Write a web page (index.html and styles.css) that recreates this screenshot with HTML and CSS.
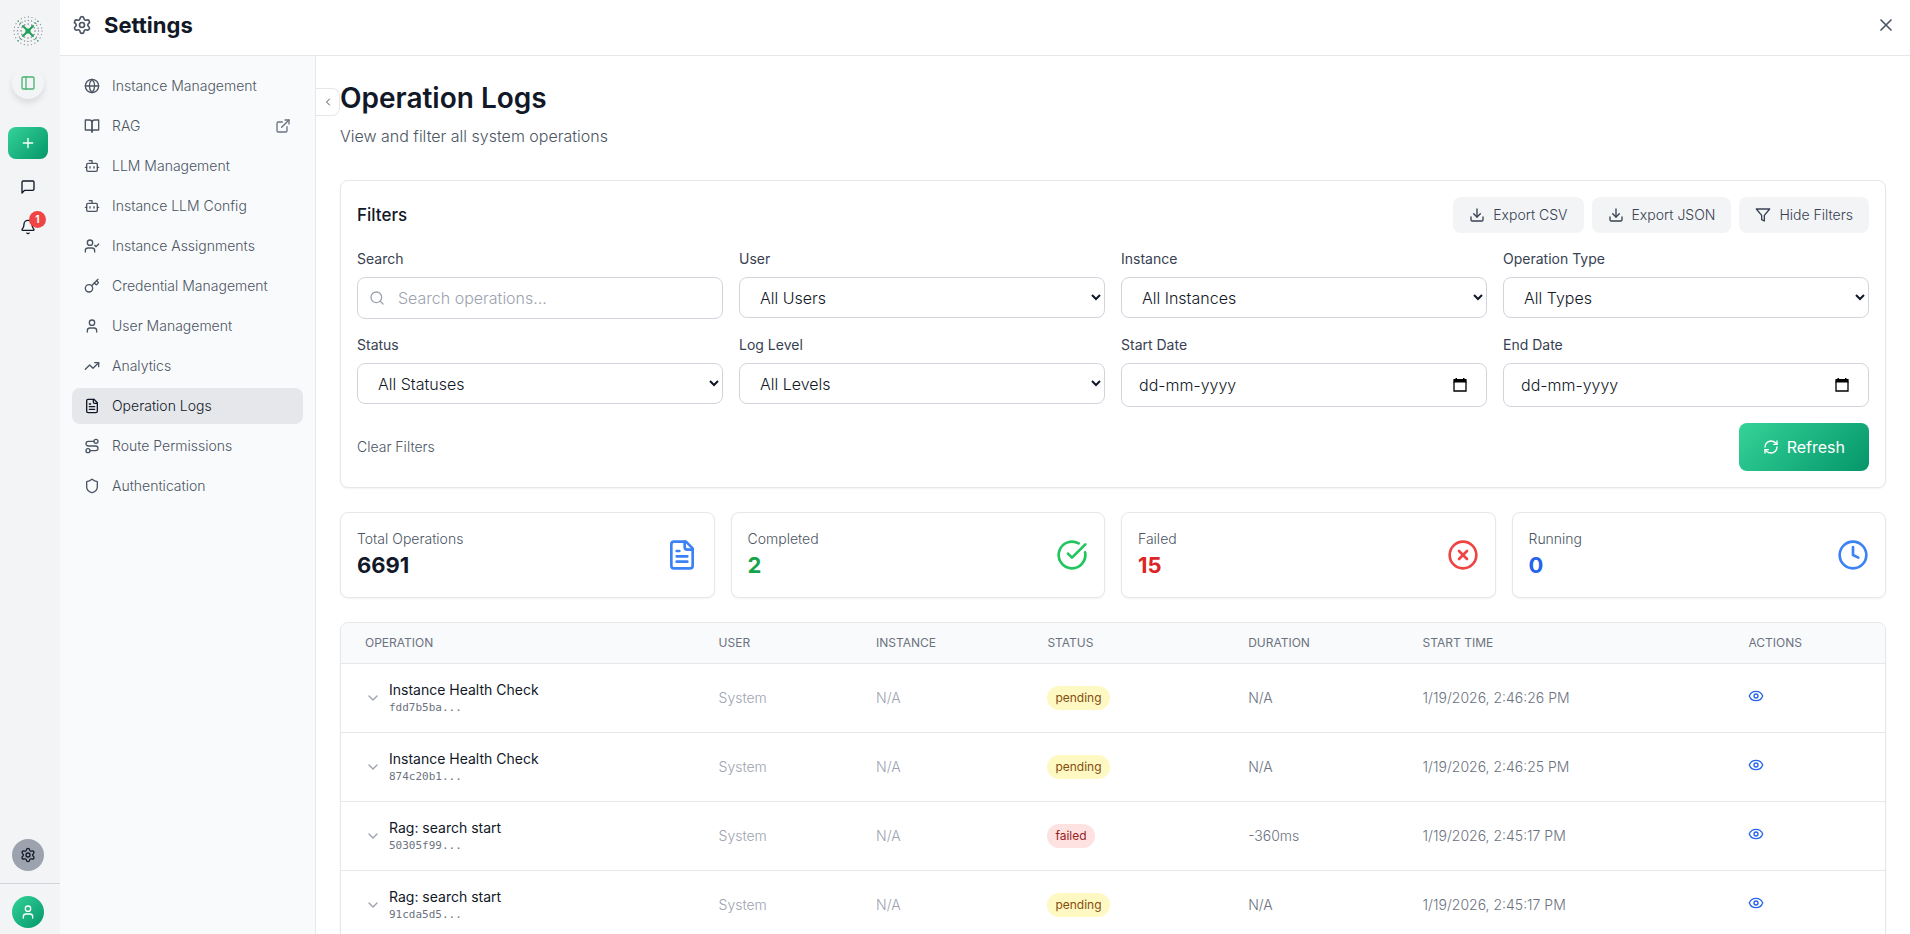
FILE: index.html
```html
<!DOCTYPE html>
<html lang="en">
<head>
  <meta charset="UTF-8">
  <meta name="viewport" content="width=device-width, initial-scale=1.0">
  <title>Settings - Operation Logs</title>
  <link rel="stylesheet" href="styles.css">
</head>
<body>
  <!-- icon set -->
  <svg class="icon-set" aria-hidden="true">
    <symbol id="i-settings" viewBox="0 0 24 24"><path d="M9.671 4.136a2.34 2.34 0 0 1 4.659 0 2.34 2.34 0 0 0 3.319 1.915 2.34 2.34 0 0 1 2.33 4.033 2.34 2.34 0 0 0 0 3.831 2.34 2.34 0 0 1-2.33 4.033 2.34 2.34 0 0 0-3.319 1.915 2.34 2.34 0 0 1-4.659 0 2.34 2.34 0 0 0-3.32-1.915 2.34 2.34 0 0 1-2.33-4.033 2.34 2.34 0 0 0 0-3.831A2.34 2.34 0 0 1 6.35 6.051a2.34 2.34 0 0 0 3.319-1.915"/><circle cx="12" cy="12" r="3"/></symbol>
    <symbol id="i-x" viewBox="0 0 24 24"><path d="M18 6 6 18M6 6l12 12"/></symbol>
    <symbol id="i-panel" viewBox="0 0 24 24"><rect x="3" y="3" width="18" height="18" rx="2"/><path d="M9 3v18"/></symbol>
    <symbol id="i-plus" viewBox="0 0 24 24"><path d="M5 12h14M12 5v14"/></symbol>
    <symbol id="i-message" viewBox="0 0 24 24"><path d="M21 15a2 2 0 0 1-2 2H7l-4 4V5a2 2 0 0 1 2-2h14a2 2 0 0 1 2 2z"/></symbol>
    <symbol id="i-bell" viewBox="0 0 24 24"><path d="M10.268 21a2 2 0 0 0 3.464 0"/><path d="M3.262 15.326A1 1 0 0 0 4 17h16a1 1 0 0 0 .74-1.673C19.41 13.956 18 12.499 18 8A6 6 0 0 0 6 8c0 4.499-1.411 5.956-2.738 7.326"/></symbol>
    <symbol id="i-globe" viewBox="0 0 24 24"><circle cx="12" cy="12" r="10"/><path d="M12 2a14.5 14.5 0 0 0 0 20 14.5 14.5 0 0 0 0-20"/><path d="M2 12h20"/></symbol>
    <symbol id="i-book" viewBox="0 0 24 24"><path d="M2 3h6a4 4 0 0 1 4 4v14a3 3 0 0 0-3-3H2z"/><path d="M22 3h-6a4 4 0 0 0-4 4v14a3 3 0 0 1 3-3h7z"/></symbol>
    <symbol id="i-external" viewBox="0 0 24 24"><path d="M15 3h6v6"/><path d="M10 14 21 3"/><path d="M18 13v6a2 2 0 0 1-2 2H5a2 2 0 0 1-2-2V8a2 2 0 0 1 2-2h6"/></symbol>
    <symbol id="i-bot" viewBox="0 0 24 24"><path d="M12 8V4H8"/><rect x="4" y="8" width="16" height="12" rx="2"/><path d="M2 14h2M20 14h2M15 13v2M9 13v2"/></symbol>
    <symbol id="i-user-check" viewBox="0 0 24 24"><path d="m16 11 2 2 4-4"/><path d="M16 21v-2a4 4 0 0 0-4-4H6a4 4 0 0 0-4 4v2"/><circle cx="9" cy="7" r="4"/></symbol>
    <symbol id="i-key" viewBox="0 0 24 24"><path d="m15.5 7.5 2.3 2.3a1 1 0 0 0 1.4 0l2.1-2.1a1 1 0 0 0 0-1.4L19 4"/><path d="m21 2-9.6 9.6"/><circle cx="7.5" cy="15.5" r="5.5"/></symbol>
    <symbol id="i-user" viewBox="0 0 24 24"><path d="M19 21v-2a4 4 0 0 0-4-4H9a4 4 0 0 0-4 4v2"/><circle cx="12" cy="7" r="4"/></symbol>
    <symbol id="i-trend" viewBox="0 0 24 24"><path d="M16 7h6v6"/><path d="m22 7-8.5 8.5-5-5L2 17"/></symbol>
    <symbol id="i-file" viewBox="0 0 24 24"><path d="M15 2H6a2 2 0 0 0-2 2v16a2 2 0 0 0 2 2h12a2 2 0 0 0 2-2V7Z"/><path d="M14 2v4a2 2 0 0 0 2 2h4M10 9H8M16 13H8M16 17H8"/></symbol>
    <symbol id="i-route" viewBox="0 0 24 24"><circle cx="6" cy="19" r="3"/><path d="M9 19h8.5a3.5 3.5 0 0 0 0-7h-11a3.5 3.5 0 0 1 0-7H15"/><circle cx="18" cy="5" r="3"/></symbol>
    <symbol id="i-shield" viewBox="0 0 24 24"><path d="M20 13c0 5-3.5 7.5-7.66 8.95a1 1 0 0 1-.67-.01C7.5 20.5 4 18 4 13V6a1 1 0 0 1 1-1c2 0 4.5-1.2 6.24-2.72a1.17 1.17 0 0 1 1.52 0C14.51 3.81 17 5 19 5a1 1 0 0 1 1 1z"/></symbol>
    <symbol id="i-left" viewBox="0 0 24 24"><path d="m15 18-6-6 6-6"/></symbol>
    <symbol id="i-down" viewBox="0 0 24 24"><path d="m6 9 6 6 6-6"/></symbol>
    <symbol id="i-download" viewBox="0 0 24 24"><path d="M21 15v4a2 2 0 0 1-2 2H5a2 2 0 0 1-2-2v-4"/><path d="m7 10 5 5 5-5"/><path d="M12 15V3"/></symbol>
    <symbol id="i-filter" viewBox="0 0 24 24"><path d="M22 3H2l8 9.46V19l4 2v-8.54z"/></symbol>
    <symbol id="i-search" viewBox="0 0 24 24"><circle cx="11" cy="11" r="8"/><path d="m21 21-4.3-4.3"/></symbol>
    <symbol id="i-refresh" viewBox="0 0 24 24"><path d="M3 12a9 9 0 0 1 9-9 9.75 9.75 0 0 1 6.74 2.74L21 8"/><path d="M21 3v5h-5"/><path d="M21 12a9 9 0 0 1-9 9 9.75 9.75 0 0 1-6.74-2.74L3 16"/><path d="M8 16H3v5"/></symbol>
    <symbol id="i-check" viewBox="0 0 24 24"><path d="M21.801 10A10 10 0 1 1 17 3.335"/><path d="m9 11 3 3L22 4"/></symbol>
    <symbol id="i-fail" viewBox="0 0 24 24"><circle cx="12" cy="12" r="10"/><path d="m15 9-6 6M9 9l6 6"/></symbol>
    <symbol id="i-clock" viewBox="0 0 24 24"><circle cx="12" cy="12" r="10"/><path d="M12 6v6l4 2"/></symbol>
    <symbol id="i-eye" viewBox="0 0 24 24"><path d="M2.062 12.348a1 1 0 0 1 0-.696 10.75 10.75 0 0 1 19.876 0 1 1 0 0 1 0 .696 10.75 10.75 0 0 1-19.876 0"/><circle cx="12" cy="12" r="3"/></symbol>
    <symbol id="i-calendar" viewBox="0 0 14 14"><path d="M1 3.5v9.5h12v-9.5" fill="none" stroke="#000" stroke-width="1.3"/><path d="M.4 1h13.2v3.6H.4zM2.5 0h1.5v2H2.500zM10 0h1.500v2H10z" fill="#000" stroke="none"/></symbol>
  </svg>

  <div class="app">
    <nav class="rail" aria-label="Main">
      <svg class="logo" viewBox="0 0 30 30" fill="none">
        <g stroke="#8b9099" stroke-linecap="round">
          <circle cx="15" cy="15" r="14" stroke-width="1.3" stroke-dasharray="0 3.665"/>
          <circle cx="15" cy="15" r="10.500" stroke-width="1.5" stroke-dasharray="0 3.299"/>
          <circle cx="15" cy="15" r="7" stroke-width="1.7" stroke-dasharray="0 3.665"/>
        </g>
        <path d="m10 10 10 10M20 10 10 20" stroke="#22a05a" stroke-width="2" stroke-linecap="round"/>
        <circle cx="15" cy="15" r="2.600" fill="#22a05a"/>
        <g fill="#22a05a">
          <circle cx="7.300" cy="7.300" r=".8"/><circle cx="22.700" cy="7.300" r=".8"/><circle cx="7.300" cy="22.700" r=".8"/><circle cx="22.700" cy="22.700" r=".8"/>
          <circle cx="5.200" cy="5.200" r=".7"/><circle cx="24.800" cy="5.200" r=".7"/><circle cx="5.200" cy="24.800" r=".7"/><circle cx="24.800" cy="24.800" r=".7"/>
        </g>
      </svg>
      <button class="rail-toggle" aria-label="Toggle sidebar"><svg class="icon"><use href="#i-panel"/></svg></button>
      <button class="rail-new" aria-label="New chat"><svg class="icon"><use href="#i-plus"/></svg></button>
      <div class="rail-links">
        <button class="rail-btn" aria-label="Chats"><svg class="icon"><use href="#i-message"/></svg></button>
        <button class="rail-btn" aria-label="Notifications"><svg class="icon"><use href="#i-bell"/></svg><span class="badge">1</span></button>
      </div>
      <div class="rail-bottom">
        <button class="rail-settings" aria-label="Settings"><svg class="icon"><use href="#i-settings"/></svg></button>
        <div class="rail-account">
          <button class="avatar" aria-label="Account"><svg class="icon"><use href="#i-user"/></svg></button>
        </div>
      </div>
    </nav>

    <div class="page">
      <header class="topbar">
        <svg class="icon icon-md"><use href="#i-settings"/></svg>
        <h2>Settings</h2>
        <button class="close" aria-label="Close"><svg class="icon icon-md"><use href="#i-x"/></svg></button>
      </header>

      <div class="body">
        <aside class="sidebar">
          <a href="#"><svg class="icon"><use href="#i-globe"/></svg>Instance Management</a>
          <a href="#"><svg class="icon"><use href="#i-book"/></svg>RAG<svg class="icon external"><use href="#i-external"/></svg></a>
          <a href="#"><svg class="icon"><use href="#i-bot"/></svg>LLM Management</a>
          <a href="#"><svg class="icon"><use href="#i-bot"/></svg>Instance LLM Config</a>
          <a href="#"><svg class="icon"><use href="#i-user-check"/></svg>Instance Assignments</a>
          <a href="#"><svg class="icon"><use href="#i-key"/></svg>Credential Management</a>
          <a href="#"><svg class="icon"><use href="#i-user"/></svg>User Management</a>
          <a href="#"><svg class="icon"><use href="#i-trend"/></svg>Analytics</a>
          <a href="#" class="active"><svg class="icon"><use href="#i-file"/></svg>Operation Logs</a>
          <a href="#"><svg class="icon"><use href="#i-route"/></svg>Route Permissions</a>
          <a href="#"><svg class="icon"><use href="#i-shield"/></svg>Authentication</a>
        </aside>

        <main class="content">
          <button class="collapse" aria-label="Collapse menu"><svg class="icon icon-sm"><use href="#i-left"/></svg></button>
          <h1>Operation Logs</h1>
          <p class="subtitle">View and filter all system operations</p>

          <section class="card filters">
            <div class="filters-head">
              <h3>Filters</h3>
              <div class="actions">
                <button class="btn"><svg class="icon"><use href="#i-download"/></svg>Export CSV</button>
                <button class="btn"><svg class="icon"><use href="#i-download"/></svg>Export JSON</button>
                <button class="btn"><svg class="icon"><use href="#i-filter"/></svg>Hide Filters</button>
              </div>
            </div>

            <div class="fields">
              <div class="field">
                <label for="search">Search</label>
                <div class="search-box">
                  <svg class="icon"><use href="#i-search"/></svg>
                  <input type="text" id="search" placeholder="Search operations...">
                </div>
              </div>
              <div class="field">
                <label for="user">User</label>
                <select id="user"><option>All Users</option></select>
              </div>
              <div class="field">
                <label for="instance">Instance</label>
                <select id="instance"><option>All Instances</option></select>
              </div>
              <div class="field">
                <label for="type">Operation Type</label>
                <select id="type"><option>All Types</option></select>
              </div>
              <div class="field">
                <label for="status">Status</label>
                <select id="status"><option>All Statuses</option></select>
              </div>
              <div class="field">
                <label for="level">Log Level</label>
                <select id="level"><option>All Levels</option></select>
              </div>
              <div class="field">
                <label for="start">Start Date</label>
                <div class="date-box">
                  <input type="text" id="start" placeholder="dd-mm-yyyy">
                  <button aria-label="Pick start date"><svg class="calendar"><use href="#i-calendar"/></svg></button>
                </div>
              </div>
              <div class="field">
                <label for="end">End Date</label>
                <div class="date-box">
                  <input type="text" id="end" placeholder="dd-mm-yyyy">
                  <button aria-label="Pick end date"><svg class="calendar"><use href="#i-calendar"/></svg></button>
                </div>
              </div>
            </div>

            <div class="filters-foot">
              <button class="clear">Clear Filters</button>
              <button class="refresh"><svg class="icon"><use href="#i-refresh"/></svg>Refresh</button>
            </div>
          </section>

          <section class="stats">
            <div class="card stat">
              <div><p>Total Operations</p><strong>6691</strong></div>
              <svg class="icon icon-lg blue"><use href="#i-file"/></svg>
            </div>
            <div class="card stat">
              <div><p>Completed</p><strong class="num-green">2</strong></div>
              <svg class="icon icon-lg green"><use href="#i-check"/></svg>
            </div>
            <div class="card stat">
              <div><p>Failed</p><strong class="num-red">15</strong></div>
              <svg class="icon icon-lg red"><use href="#i-fail"/></svg>
            </div>
            <div class="card stat">
              <div><p>Running</p><strong class="num-blue">0</strong></div>
              <svg class="icon icon-lg blue"><use href="#i-clock"/></svg>
            </div>
          </section>

          <section class="card logs">
            <table>
              <thead>
                <tr>
                  <th class="col-operation">Operation</th>
                  <th class="col-user">User</th>
                  <th class="col-instance">Instance</th>
                  <th class="col-status">Status</th>
                  <th class="col-duration">Duration</th>
                  <th class="col-start">Start Time</th>
                  <th class="col-actions">Actions</th>
                </tr>
              </thead>
              <tbody>
                <tr>
                  <td><div class="op"><button aria-label="Expand"><svg class="icon"><use href="#i-down"/></svg></button><div><div class="op-name">Instance Health Check</div><div class="op-id">fdd7b5ba...</div></div></div></td>
                  <td class="muted">System</td>
                  <td class="muted">N/A</td>
                  <td><span class="pill pending">pending</span></td>
                  <td>N/A</td>
                  <td>1/19/2026, 2:46:26 PM</td>
                  <td><button class="view" aria-label="View"><svg class="icon"><use href="#i-eye"/></svg></button></td>
                </tr>
                <tr>
                  <td><div class="op"><button aria-label="Expand"><svg class="icon"><use href="#i-down"/></svg></button><div><div class="op-name">Instance Health Check</div><div class="op-id">874c20b1...</div></div></div></td>
                  <td class="muted">System</td>
                  <td class="muted">N/A</td>
                  <td><span class="pill pending">pending</span></td>
                  <td>N/A</td>
                  <td>1/19/2026, 2:46:25 PM</td>
                  <td><button class="view" aria-label="View"><svg class="icon"><use href="#i-eye"/></svg></button></td>
                </tr>
                <tr>
                  <td><div class="op"><button aria-label="Expand"><svg class="icon"><use href="#i-down"/></svg></button><div><div class="op-name">Rag: search start</div><div class="op-id">50305f99...</div></div></div></td>
                  <td class="muted">System</td>
                  <td class="muted">N/A</td>
                  <td><span class="pill failed">failed</span></td>
                  <td>-360ms</td>
                  <td>1/19/2026, 2:45:17 PM</td>
                  <td><button class="view" aria-label="View"><svg class="icon"><use href="#i-eye"/></svg></button></td>
                </tr>
                <tr>
                  <td><div class="op"><button aria-label="Expand"><svg class="icon"><use href="#i-down"/></svg></button><div><div class="op-name">Rag: search start</div><div class="op-id">91cda5d5...</div></div></div></td>
                  <td class="muted">System</td>
                  <td class="muted">N/A</td>
                  <td><span class="pill pending">pending</span></td>
                  <td>N/A</td>
                  <td>1/19/2026, 2:45:17 PM</td>
                  <td><button class="view" aria-label="View"><svg class="icon"><use href="#i-eye"/></svg></button></td>
                </tr>
              </tbody>
            </table>
          </section>
        </main>
      </div>
    </div>
  </div>
</body>
</html>
```
FILE: styles.css
```css
* {
  box-sizing: border-box;
}
body {
  margin: 0;
  font-family: Inter, "Liberation Sans", sans-serif;
  font-size: 14px;
  line-height: 20px;
  font-weight: 300;
  color: #111827;
  background-color: #fff;
}
h1, h2, h3, p {
  margin: 0;
}
button {
  font: inherit;
  color: inherit;
  border: none;
  padding: 0;
  background: none;
  cursor: pointer;
}
a {
  color: inherit;
  text-decoration: none;
}
.icon-set {
  display: none;
}
.icon {
  display: block;
  flex: none;
  width: 16px;
  height: 16px;
  fill: none;
  stroke: currentColor;
  stroke-width: 2;
  stroke-linecap: round;
  stroke-linejoin: round;
}
.icon-sm {
  width: 12px;
  height: 12px;
}
.icon-md {
  width: 20px;
  height: 20px;
}
.icon-lg {
  width: 32px;
  height: 32px;
}
.app {
  display: flex;
  height: 100vh;
  overflow: hidden;
}

/* left rail */
.rail {
  display: flex;
  flex-direction: column;
  align-items: center;
  flex: none;
  width: 60px;
  padding-top: 16px;
  background-color: #f3f4f6;
}
.rail > *, .rail-links, .rail-settings, .avatar {
  margin-right: 4px;
}
.logo {
  width: 30px;
  height: 30px;
}
.rail button {
  display: flex;
  align-items: center;
  justify-content: center;
}
.rail-toggle {
  width: 32px;
  height: 32px;
  margin-top: 21px;
  border-radius: 50%;
  color: #4bb373;
  box-shadow: 0 4px 6px rgba(0, 0, 0, 0.1);
}
.rail .rail-new {
  width: 40px;
  height: 32px;
  margin-top: 28px;
  border-radius: 8px;
  color: #fff;
  background: linear-gradient(135deg, #34d399, #059669);
}
.rail-links {
  display: flex;
  flex-direction: column;
  gap: 8px;
  margin-top: 12px;
}
.rail-btn {
  position: relative;
  width: 32px;
  height: 32px;
}
.badge {
  position: absolute;
  top: 0;
  right: -2px;
  width: 17px;
  height: 17px;
  border-radius: 50%;
  background-color: #ef4444;
  color: #fff;
  font-size: 10px;
  line-height: 17px;
  font-weight: 700;
  text-align: center;
}
.rail > .rail-bottom {
  display: flex;
  flex-direction: column;
  align-items: center;
  gap: 12px;
  width: 100%;
  margin: auto 0 0;
}
.rail-settings, .avatar {
  width: 32px;
  height: 32px;
  border-radius: 50%;
}
.rail-settings {
  background-color: #9ca3af;
}
.rail-account {
  display: flex;
  justify-content: center;
  width: 100%;
  padding: 12px 0 6px;
  border-top: 1px solid #d1d5db;
}
.avatar {
  color: #fff;
  background: linear-gradient(135deg, #34d399, #059669);
}

/* header */
.page {
  display: flex;
  flex-direction: column;
  flex: 1;
  min-width: 0;
}
.topbar {
  display: flex;
  align-items: center;
  gap: 12px;
  padding: 9px 14px 14px 12px;
  border-bottom: 1px solid #e5e7eb;
  color: #4b5563;
}
.topbar h2 {
  font-size: 22px;
  line-height: 32px;
  font-weight: 700;
  color: #111827;
}
.close {
  margin-left: auto;
}
.body {
  display: flex;
  flex: 1;
  min-height: 0;
}

/* settings menu */
.sidebar {
  display: flex;
  flex-direction: column;
  gap: 4px;
  flex: none;
  width: 256px;
  padding: 12px;
  border-right: 1px solid #e5e7eb;
  background-color: #f9fafb;
}
.sidebar a {
  display: flex;
  align-items: center;
  gap: 12px;
  padding: 8px 12px;
  border-radius: 8px;
  color: #4b5563;
}
.sidebar a.active {
  background-color: #e5e7eb;
  color: #111827;
}
.external {
  margin-left: auto;
  color: #6b7280;
}

/* content */
.content {
  position: relative;
  flex: 1;
  min-width: 0;
  padding: 24px;
  overflow-y: auto;
  scrollbar-width: none;
}
.collapse {
  position: absolute;
  top: 32px;
  left: 0;
  display: flex;
  align-items: center;
  justify-content: center;
  width: 24px;
  height: 28px;
  border: 1px solid #e5e7eb;
  border-left: none;
  border-radius: 0 8px 8px 0;
  color: #4b5563;
  background-color: #fff;
}
h1 {
  font-size: 28px;
  line-height: 36px;
  font-weight: 600;
}
.subtitle {
  margin-top: 8px;
  font-size: 16px;
  line-height: 24px;
  color: #4b5563;
}
.card {
  border: 1px solid #e5e7eb;
  border-radius: 8px;
  background-color: #fff;
  box-shadow: 0 1px 2px rgba(0, 0, 0, 0.05);
}
.filters {
  margin-top: 32px;
  padding: 16px;
}
.filters-head, .filters-foot {
  display: flex;
  align-items: center;
  justify-content: space-between;
}
h3 {
  font-size: 17px;
  line-height: 28px;
  font-weight: 500;
}
.actions {
  display: flex;
  gap: 8px;
}
.btn {
  display: flex;
  align-items: center;
  gap: 8px;
  padding: 8px 16px;
  border-radius: 8px;
  background-color: #f3f4f6;
  color: #374151;
}
.fields {
  display: grid;
  grid-template-columns: repeat(4, 1fr);
  gap: 16px;
  margin: 16px 0;
}
.field label {
  display: block;
  margin-bottom: 8px;
  font-weight: 400;
  color: #374151;
}
.field input, .field select {
  display: block;
  width: 100%;
  border: 1px solid #d1d5db;
  border-radius: 8px;
  background-color: #fff;
  color: #111827;
  font-family: inherit;
  font-size: 16px;
  font-weight: 300;
}
.field select {
  height: 41px;
  padding: 8px 16px;
}
.search-box, .date-box {
  position: relative;
}
.search-box input {
  height: 42px;
  padding: 8px 16px 8px 40px;
}
.search-box input::placeholder {
  color: #9ca3af;
}
.search-box .icon {
  position: absolute;
  top: 13px;
  left: 12px;
  color: #9ca3af;
}
.date-box input {
  height: 44px;
  padding: 8px 48px 8px 17px;
}
.date-box input::placeholder {
  color: #111827;
}
.date-box button {
  position: absolute;
  top: 15px;
  right: 20px;
}
.calendar {
  display: block;
  width: 14px;
  height: 14px;
}
.clear {
  color: #4b5563;
}
.refresh {
  display: flex;
  align-items: center;
  gap: 8px;
  padding: 12px 24px;
  border-radius: 8px;
  background: linear-gradient(135deg, #34d399, #059669);
  color: #fff;
  font-size: 16px;
  line-height: 24px;
  font-weight: 400;
}

/* stats */
.stats {
  display: grid;
  grid-template-columns: repeat(4, 1fr);
  gap: 16px;
  margin: 24px 0;
}
.stat {
  display: flex;
  align-items: center;
  justify-content: space-between;
  padding: 16px;
}
.stat p {
  color: #4b5563;
}
.stat strong {
  display: block;
  font-size: 22px;
  line-height: 32px;
  font-weight: 700;
}
.blue { color: #3b82f6; }
.green { color: #22c55e; }
.red { color: #ef4444; }
.num-green { color: #16a34a; }
.num-red { color: #dc2626; }
.num-blue { color: #2563eb; }

/* table */
.logs {
  overflow: hidden;
}
table {
  width: 100%;
  table-layout: fixed;
  border-collapse: collapse;
}
th {
  padding: 12px 24px;
  border-bottom: 1px solid #e5e7eb;
  background-color: #f9fafb;
  color: #6b7280;
  font-size: 12px;
  line-height: 16px;
  font-weight: 400;
  text-align: left;
  text-transform: uppercase;
}
td {
  padding: 16px 24px;
  border-bottom: 1px solid #e5e7eb;
  color: #6b7280;
}
.col-operation { width: 22.9%; }
.col-user { width: 10.2%; }
.col-instance { width: 11.1%; }
.col-status { width: 13%; }
.col-duration { width: 11.3%; }
.col-start { width: 21.1%; }
.col-actions { width: 10.4%; }
.op {
  display: flex;
  align-items: center;
  gap: 8px;
  color: #9ca3af;
}
.op-name {
  font-weight: 400;
  color: #111827;
}
.op-id {
  color: #6b7280;
  font-family: "DejaVu Sans Mono", monospace;
  font-size: 11px;
  line-height: 16px;
}
.muted {
  color: #9ca3af;
}
.pill {
  display: inline-block;
  padding: 4px 8px;
  border-radius: 12px;
  font-size: 12px;
  line-height: 16px;
  font-weight: 400;
}
.pending {
  background-color: #fef9c3;
  color: #854d0e;
}
.failed {
  background-color: #fee2e2;
  color: #991b1b;
}
.view {
  color: #2563eb;
}
```
